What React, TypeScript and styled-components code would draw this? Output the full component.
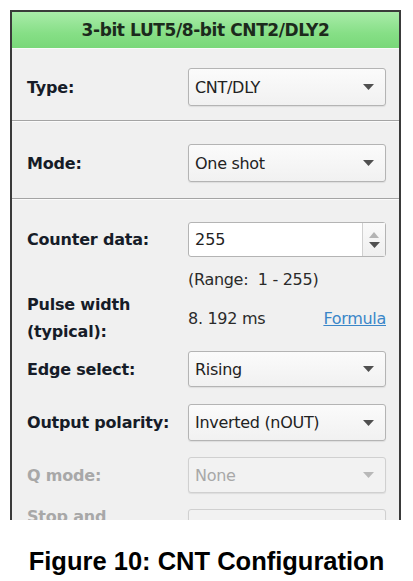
import React from "react";
import styled, { createGlobalStyle } from "styled-components";

const Global = createGlobalStyle`
  html, body { margin: 0; padding: 0; background: #ffffff; }
  body { width: 413px; height: 581px; overflow: hidden; }
`;

const UI = `"DejaVu Sans", "Noto Sans", sans-serif`;

const Page = styled.div`
  display: flex;
  flex-direction: column;
  padding: 10px 0 0 10px;
`;

const Panel = styled.div`
  box-sizing: border-box;
  width: 391px;
  height: 510px;
  overflow: hidden;
  border: 2px solid #3a3a3a;
  border-bottom: none;
  background: #f0f0f0;
  display: flex;
  flex-direction: column;
`;

const Header = styled.div`
  height: 36px;
  flex: none;
  display: flex;
  align-items: center;
  justify-content: center;
  background: linear-gradient(#a9eba9, #86df86 60%, #79d879);
  border-bottom: 1px solid #fafafa;
  font-family: ${UI};
  font-weight: bold;
  font-size: 17px;
  color: #1c2a1c;
  letter-spacing: -0.4px;
`;

const Section = styled.div<{ $pt: number; $pb: number }>`
  display: flex;
  flex-direction: column;
  padding: ${(p) => p.$pt}px 13px ${(p) => p.$pb}px 15px;
  flex: none;
`;

const Divider = styled.div`
  height: 1px;
  flex: none;
  background: #a4a4a4;
  border-bottom: 1px solid #fbfbfb;
`;

const Row = styled.div<{ $mt?: number; $h: number }>`
  display: grid;
  grid-template-columns: 161px 198px;
  align-items: center;
  height: ${(p) => p.$h}px;
  margin-top: ${(p) => p.$mt ?? 0}px;
`;

const Label = styled.div<{ $disabled?: boolean; $top?: boolean }>`
  font-family: ${UI};
  font-weight: bold;
  font-size: 16px;
  line-height: 27px;
  letter-spacing: -0.2px;
  white-space: nowrap;
  color: ${(p) => (p.$disabled ? "#a8a8a8" : "#161c28")};
  ${(p) => (p.$top ? "align-self: start; margin-top: -6px;" : "")}
`;

const Select = styled.div<{ $disabled?: boolean; $h?: number }>`
  box-sizing: border-box;
  height: ${(p) => p.$h ?? 37}px;
  border: 1px solid ${(p) => (p.$disabled ? "#d0d0d0" : "#b4b4b4")};
  border-radius: 3px;
  background: ${(p) =>
    p.$disabled ? "#f2f2f2" : "linear-gradient(#fbfbfb, #f1f1f1)"};
  box-shadow: 0 1px 1px rgba(0, 0, 0, 0.08);
  display: flex;
  align-items: center;
  justify-content: space-between;
  padding: 0 11px 0 6px;
  font-family: ${UI};
  font-size: 16px;
  letter-spacing: -0.3px;
  color: ${(p) => (p.$disabled ? "#a8a8a8" : "#222222")};
`;

const Spin = styled.div`
  box-sizing: border-box;
  height: 35px;
  border: 1px solid #b4b4b4;
  border-radius: 3px;
  background: #ffffff;
  display: grid;
  grid-template-columns: 1fr 23px;
  font-family: ${UI};
  font-size: 16px;
  color: #222;
`;

const SpinValue = styled.div`
  display: flex;
  align-items: center;
  padding-left: 6px;
`;

const SpinButtons = styled.div`
  border-left: 1px solid #d0d0d0;
  background: linear-gradient(#fafafa, #efefef);
  display: flex;
  flex-direction: column;
  align-items: center;
  justify-content: center;
  gap: 4px;
`;

const Note = styled.div`
  font-family: ${UI};
  font-size: 16px;
  letter-spacing: -0.3px;
  color: #2a2a2a;
`;

const ValueLine = styled.div`
  display: flex;
  justify-content: space-between;
  align-items: center;
  font-family: ${UI};
  font-size: 16px;
  letter-spacing: -0.3px;
  color: #2a2a2a;
`;

const Link = styled.a`
  color: #3a86c8;
  text-decoration: underline;
  cursor: pointer;
`;

const Caption = styled.div`
  margin-top: 27px;
  width: 413px;
  margin-left: -10px;
  text-align: center;
  font-family: "Liberation Sans", Arial, sans-serif;
  font-weight: bold;
  font-size: 25.5px;
  line-height: 29px;
  color: #000;
`;

const Arrow = ({ color = "#505050" }: { color?: string }) => (
  <svg width="11" height="6" viewBox="0 0 11 6">
    <path d="M0 0 H11 L5.5 6 Z" fill={color} />
  </svg>
);

const UpArrow = ({ color }: { color: string }) => (
  <svg width="10" height="6" viewBox="0 0 10 6">
    <path d="M0 6 H10 L5 0 Z" fill={color} />
  </svg>
);

const Dropdown = ({
  value,
  disabled,
  h,
}: {
  value: string;
  disabled?: boolean;
  h?: number;
}) => (
  <Select $disabled={disabled} $h={h}>
    <span>{value}</span>
    <Arrow color={disabled ? "#b8b8b8" : "#505050"} />
  </Select>
);

export default function App() {
  return (
    <Page>
      <Global />
      <Panel>
        <Header>3-bit LUT5/8-bit CNT2/DLY2</Header>
        <Section $pt={19} $pb={14}>
          <Row $h={38}>
            <Label>Type:</Label>
            <Dropdown value="CNT/DLY" h={38} />
          </Row>
        </Section>
        <Divider />
        <Section $pt={22} $pb={16}>
          <Row $h={38}>
            <Label>Mode:</Label>
            <Dropdown value="One shot" h={38} />
          </Row>
        </Section>
        <Divider />
        <Section $pt={22} $pb={0}>
          <Row $h={35}>
            <Label>Counter data:</Label>
            <Spin>
              <SpinValue>255</SpinValue>
              <SpinButtons>
                <UpArrow color="#b4b4b4" />
                <Arrow color="#505050" />
              </SpinButtons>
            </Spin>
          </Row>
          <Row $h={24} $mt={10}>
            <span />
            <Note>(Range:&nbsp; 1 - 255)</Note>
          </Row>
          <Row $h={54}>
            <Label>
              Pulse width
              <br />
              (typical):
            </Label>
            <ValueLine>
              <span>8. 192 ms</span>
              <Link>Formula</Link>
            </ValueLine>
          </Row>
          <Row $h={36} $mt={6}>
            <Label>Edge select:</Label>
            <Dropdown value="Rising" h={36} />
          </Row>
          <Row $h={37} $mt={17}>
            <Label>Output polarity:</Label>
            <Dropdown value="Inverted (nOUT)" h={37} />
          </Row>
          <Row $h={36} $mt={16}>
            <Label $disabled>Q mode:</Label>
            <Dropdown value="None" disabled h={36} />
          </Row>
          <Row $h={36} $mt={16}>
            <Label $disabled $top>
              Stop and
            </Label>
            <Dropdown value="" disabled h={36} />
          </Row>
        </Section>
      </Panel>
      <Caption>Figure 10: CNT Configuration</Caption>
    </Page>
  );
}
